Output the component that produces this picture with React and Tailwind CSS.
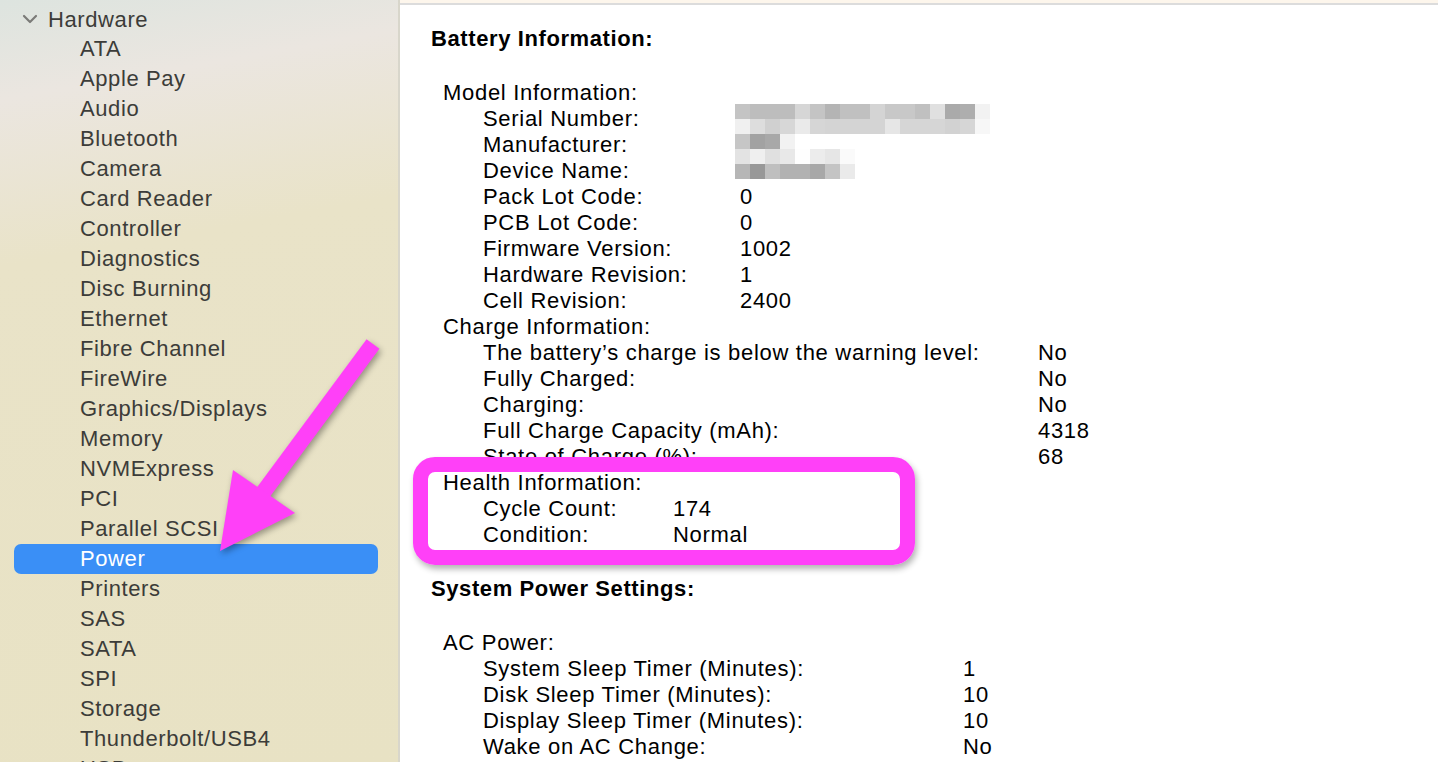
import React from "react";

const sideItems = [
  "ATA", "Apple Pay", "Audio", "Bluetooth", "Camera", "Card Reader", "Controller",
  "Diagnostics", "Disc Burning", "Ethernet", "Fibre Channel", "FireWire",
  "Graphics/Displays", "Memory", "NVMExpress", "PCI", "Parallel SCSI", "Power",
  "Printers", "SAS", "SATA", "SPI", "Storage", "Thunderbolt/USB4", "USB",
];

// pixelated (redacted) rows: each entry is a list of grey levels, 15px blocks
const blurRows = [
  ["c4", "bd", "bd", "bd", "d6", "c4", "b4", "c0", "c0", "d4", "c8", "c8", "c0", "e0", "aa", "ae", "f2"],
  ["f0", "dd", "d0", "d7", "ea", "d6", "d4", "d4", "d4", "d4", "e6", "d6", "d6", "d6", "d2", "d6", "f7"],
  ["c6", "a2", "a8", "f2"],
  ["e3", "ef", "e0", "e8", "fe", "ec", "e6", "fa"],
  ["b6", "98", "bf", "b2", "b2", "a8", "c4", "ea"],
];

const modelRows = [
  ["Serial Number:", ""],
  ["Manufacturer:", ""],
  ["Device Name:", ""],
  ["Pack Lot Code:", "0"],
  ["PCB Lot Code:", "0"],
  ["Firmware Version:", "1002"],
  ["Hardware Revision:", "1"],
  ["Cell Revision:", "2400"],
];

const chargeRows = [
  ["The battery\u2019s charge is below the warning level:", "No"],
  ["Fully Charged:", "No"],
  ["Charging:", "No"],
  ["Full Charge Capacity (mAh):", "4318"],
  ["State of Charge (%):", "68"],
];

const healthRows = [
  ["Cycle Count:", "174"],
  ["Condition:", "Normal"],
];

const acRows = [
  ["System Sleep Timer (Minutes):", "1"],
  ["Disk Sleep Timer (Minutes):", "10"],
  ["Display Sleep Timer (Minutes):", "10"],
  ["Wake on AC Change:", "No"],
];

const Group = ({ title, rows, labelWidth }) => (
  <div>
    <div className="h-[26px] leading-[26px] pl-[12px]">{title}</div>
    {rows.map(([label, value]) => (
      <div key={label} className="flex h-[26px] leading-[26px] pl-[52px]">
        <div style={{ width: labelWidth }} className="shrink-0 whitespace-nowrap">{label}</div>
        <div className="whitespace-nowrap">{value}</div>
      </div>
    ))}
  </div>
);

export default function App() {
  return (
    <div
      className="relative flex w-[1438px] h-[762px] overflow-hidden bg-white"
      style={{ fontFamily: '"Liberation Sans", Arial, sans-serif' }}
    >
      {/* Sidebar */}
      <div className="w-[400px] shrink-0 h-full border-r-2 border-[#d8d6cb] bg-[linear-gradient(170deg,#dde4df_0%,#ebe6e0_12%,#e9e3c8_32%,#e8e2c4_100%)] pt-[4px] text-[22px] tracking-[0.6px] text-[#3c3c39]">
        <div className="flex items-center h-[30px]">
          <svg width="16" height="10" viewBox="0 0 16 10" className="ml-[22px] mr-[10px]">
            <path d="M2 2 L8 8 L14 2" fill="none" stroke="#7b7b78" strokeWidth="2.2" strokeLinecap="round" strokeLinejoin="round" />
          </svg>
          <span>Hardware</span>
        </div>
        {sideItems.map((item) => (
          <div
            key={item}
            className={
              item === "Power"
                ? "ml-[14px] mr-[20px] h-[30px] leading-[30px] pl-[66px] rounded-[7px] bg-[#3a8ff6] text-white"
                : "ml-[14px] mr-[20px] h-[30px] leading-[30px] pl-[66px]"
            }
          >
            {item}
          </div>
        ))}
      </div>

      {/* Main pane */}
      <div className="flex-1 h-full flex flex-col">
        <div className="h-[5px] shrink-0 bg-[#fdf6ec] border-b-2 border-[#dcdcdc]" />
        <div className="relative pl-[31px] pt-[21px] text-[22px] tracking-[0.7px] text-black">
          <div className="h-[26px] leading-[26px] font-bold tracking-[0.6px]">Battery Information:</div>
          <div className="mt-[28px]">
            <Group title="Model Information:" rows={modelRows} labelWidth={257} />
            <Group title="Charge Information:" rows={chargeRows} labelWidth={555} />
            <Group title="Health Information:" rows={healthRows} labelWidth={190} />
          </div>
          <div className="mt-[28px] h-[26px] leading-[26px] font-bold tracking-[0.6px]">System Power Settings:</div>
          <div className="mt-[28px]">
            <Group title="AC Power:" rows={acRows} labelWidth={480} />
          </div>

          {/* redacted values */}
          <div className="absolute left-[335px] top-[99px] flex flex-col">
            {blurRows.map((row, i) => (
              <div key={i} className="flex h-[15px]">
                {row.map((c, j) => (
                  <div key={j} className="w-[15px] h-[15px]" style={{ backgroundColor: "#" + c + c + c }} />
                ))}
              </div>
            ))}
          </div>
        </div>
      </div>

      {/* Annotation: highlight box */}
      <div className="absolute left-[413px] top-[457px] w-[502px] h-[108px] rounded-[22px] border-[15px] border-[#ff40f8] shadow-[2px_4px_6px_rgba(0,0,0,0.3)]" />

      {/* Annotation: arrow */}
      <svg
        className="absolute left-0 top-0 pointer-events-none"
        width="1438"
        height="762"
        viewBox="0 0 1438 762"
        style={{ filter: "drop-shadow(2px 3px 3px rgba(0,0,0,0.35))" }}
      >
        <line x1="373" y1="344" x2="262" y2="494" stroke="#ff40f8" strokeWidth="16" />
        <polygon points="233,470 295,513 220,551" fill="#ff40f8" />
      </svg>
    </div>
  );
}
